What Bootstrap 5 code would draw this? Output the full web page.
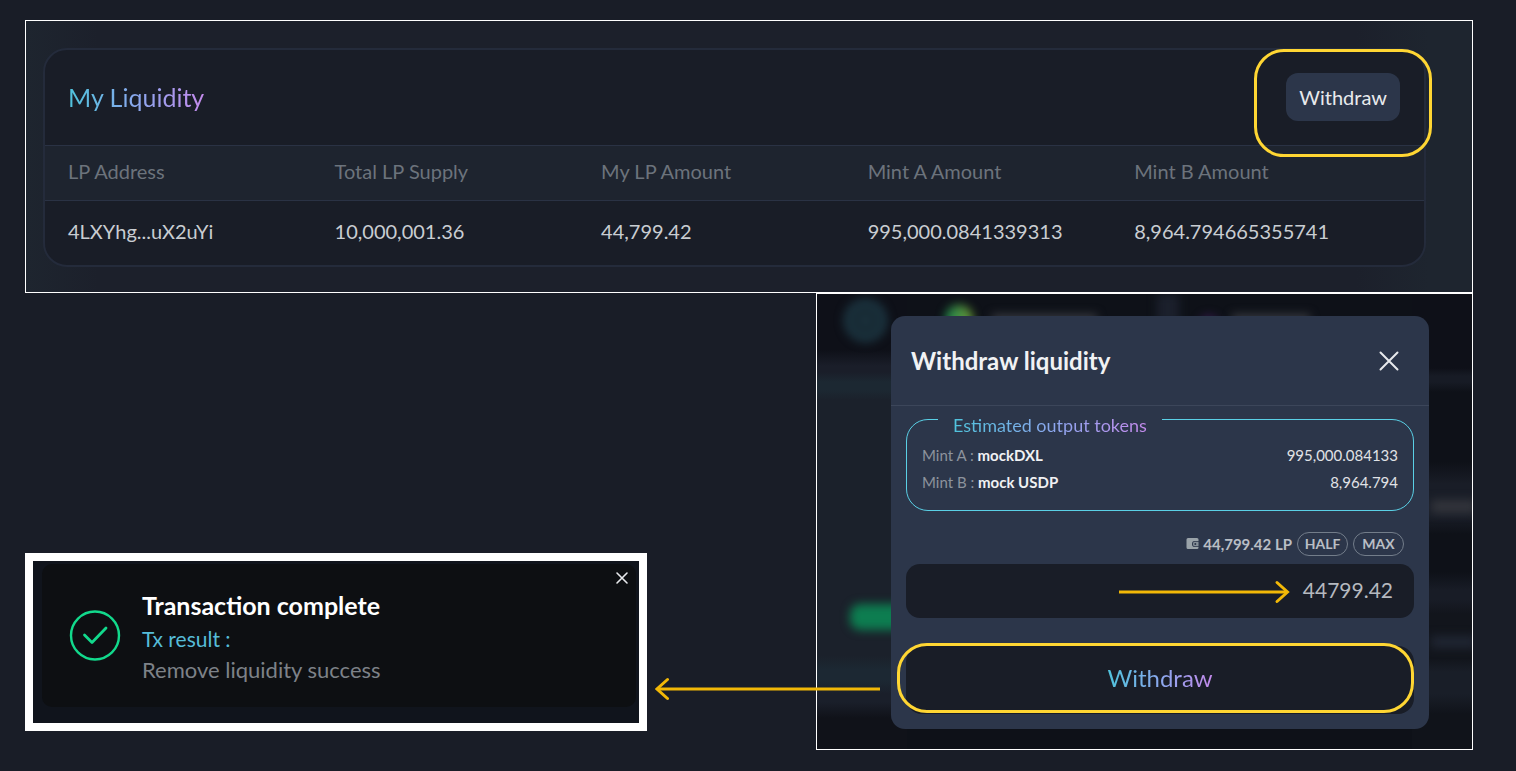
<!DOCTYPE html>
<html lang="en">
<head>
<meta charset="utf-8">
<meta name="viewport" content="width=device-width, initial-scale=1">
<title>Withdraw liquidity</title>
<link href="https://cdn.jsdelivr.net/npm/bootstrap@5.3.0/dist/css/bootstrap.min.css" rel="stylesheet">
<style>
  :root { --ink: #191d27; --slate: #2c364a; --cyan: #5ad0e6; --mark: #ffd633; --arrow: #f2b807; }
  body { background: var(--ink); color: #c9cdd2; font-family: Lato, "Liberation Sans", sans-serif; }
  .guide { padding: 20px 43px 20px 25px; }
  .grad-text { background: linear-gradient(90deg, #4fc3dc, #8aa8ee 50%, #c48aec); -webkit-background-clip: text; background-clip: text; color: transparent; }
  .marker { position: absolute; border: 3px solid var(--mark); border-radius: 30px; pointer-events: none; }
  .arrow { position: absolute; stroke: var(--arrow); stroke-width: 3; fill: none; stroke-linecap: round; }

  /* Liquidity overview */
  .overview { border: 1px solid #fff; background: linear-gradient(90deg, #1e252f, #1c202b 5%, #1c202b 92%, #1e252f 97%); padding: 27px 46px 25px 17px; }
  .pool { border: 2px solid #242b3b; border-radius: 24px; background: var(--ink); }
  .pool-head { height: 95px; padding: 0 24px 2px 23px; }
  .pool-title { font-size: 25px; line-height: 32px; }
  .btn-slate { background: var(--slate); color: #e8eaed; border: 0; border-radius: 12px; font-size: 20px; line-height: 24px; padding: 12px 13px; }
  .btn-slate:hover { background: #364259; color: #fff; }
  .pool-table { table-layout: fixed; width: 100%; font-size: 20px; line-height: 24px; }
  .pool-table col { width: 19.33%; }
  .pool-table col:last-child { width: auto; }
  .pool-table th, .pool-table td { padding: 13px 0 17px 23px; font-weight: 400; white-space: nowrap; }
  .pool-table th { background: #1e242f; color: #6c737c; border-top: 1px solid #2a3244; border-bottom: 1px solid #2a3244; }
  .pool-table td { padding-top: 18px; padding-bottom: 22px; }
  .mark-overview { top: -24px; right: -32px; bottom: -36px; left: -32px; }

  .lower { display: grid; grid-template-columns: 622fr 169fr 657fr; }

  /* Result notice */
  .notice-frame { border: 8px solid #fff; background: #10141c; padding: 3px 3px 16px 9px; margin-bottom: 19px; }
  .notice { background: #0d0f12; border-radius: 10px; padding: 0 27px; gap: 20px; height: 143px; }
  .notice-title { font-size: 25px; line-height: 36px; color: #fff; }
  .notice-text { font-size: 22px; line-height: 30px; color: #7d8288; }
  .notice-link { font-size: 21px; line-height: 32px; color: #56bcd8; text-decoration: none; }
  .notice-close { top: 7px; right: 7px; }
  .icon-btn { background: none; border: 0; padding: 0; line-height: 0; color: #e8eaed; }

  /* Withdraw dialog */
  .stage { border: 1px solid #fff; background: #0e1118; padding: 22px 43px 20px 74px; }
  .backdrop-art { position: absolute; inset: 0; overflow: hidden; }
  .side-l { position: absolute; left: 0; top: 0; bottom: 0; width: 90px; background: linear-gradient(#0e1018 0 56px, #1a1e29 72px 78px, #1c2832 88px 96px, #1b212b 106px 362px, #1c2833 376px 386px, #1a1f2a 400px 408px, #101219 424px); }
  .side-r { position: absolute; right: 0; top: 0; bottom: 0; width: 60px; background: linear-gradient(#0e1018 0 74px, #171b25 82px 88px, #0e1118 98px 168px, #191d27 190px 222px, #0e1118 240px 278px, #181c26 296px 306px, #12151c 320px 365px, #191e28 378px 400px, #10131a 420px); }
  .blob { position: absolute; filter: blur(5px); }
  .blob-ring { left: 26px; top: 4px; width: 45px; height: 45px; border-radius: 50%; background: radial-gradient(#1c3540 8%, #162731 22%, #1a303b 50%); filter: blur(4px); }
  .blob-coin { left: 128px; top: 11px; width: 28px; height: 28px; border-radius: 50%; background: linear-gradient(90deg, #17814d, #719a35); }
  .blob-name { left: 175px; top: 20px; width: 105px; height: 12px; background: #36383e; }
  .blob-bar { left: 340px; top: 0; width: 22px; height: 30px; background: #1b202c; }
  .blob-dot { left: 382px; top: 21px; width: 20px; height: 20px; border-radius: 50%; background: #33184a; }
  .blob-pair { left: 415px; top: 20px; width: 78px; height: 12px; background: #36383e; }
  .blob-btn { left: 33px; top: 310px; width: 70px; height: 26px; border-radius: 10px; background: #0d7d50; }
  .blob-r1 { right: -4px; top: 206px; width: 45px; height: 13px; background: #33353c; }
  .blob-r2 { right: -4px; top: 342px; width: 45px; height: 12px; background: #202633; }
  .sheet { background: var(--slate); border-radius: 14px; }
  .sheet-head { height: 90px; padding: 0 28px 0 20px; border-bottom: 1px solid #3c465a; }
  .sheet-title { font-size: 24px; line-height: 32px; color: #f1f2f4; }
  .sheet-body { padding: 0 15px 15px; }
  .estimate { border: 1px solid var(--cyan); border-radius: 22px; padding: 10px 15px 14px; }
  .estimate legend { float: none; width: auto; margin: 0 0 0 16px; padding: 12px 15px 0; font-size: 18px; line-height: 14px; }
  .estimate legend span { display: block; margin: -5px 0; line-height: 24px; }
  .estimate-row { font-size: 15px; line-height: 27px; color: #8c939d; }
  .estimate-row b { color: #f0f1f3; }
  .estimate-row output { padding: 0; color: #e0e2e6; }
  .balance { margin-top: 21px; padding-right: 10px; margin-bottom: 8px; font-size: 15px; line-height: 24px; color: #b9bec5; }
  .pill { border: 1px solid #737d8a; border-radius: 12px; background: none; color: #b9bec5; font-size: 14px; line-height: 22px; font-weight: 700; padding: 0 6px; margin-left: 5px; min-width: 51px; }
  .amount { height: 54px; border: 0; border-radius: 14px; background: var(--ink); color: #b5b9bf; font-size: 21px; text-align: right; padding: 0 21px 3px; }
  .amount:focus { background: var(--ink); color: #fff; }
  .submit { height: 68px; border: 0; border-radius: 16px; background: var(--ink); font-size: 24px; line-height: 32px; padding: 0 0 4px; }
  .mark-submit { top: -3px; right: 0; bottom: 1px; left: -9px; }
  .arrow-amount { right: 124px; top: 16px; }
  .arrow-result { left: -162px; bottom: 48px; }
</style>
</head>
<body>
<main class="guide">
  <section class="overview">
    <div class="pool">
      <div class="pool-head d-flex align-items-center justify-content-between">
        <h2 class="pool-title grad-text fw-normal m-0">My Liquidity</h2>
        <div class="position-relative">
          <button type="button" class="btn btn-slate">Withdraw</button>
          <span class="marker mark-overview"></span>
        </div>
      </div>
      <table class="pool-table">
        <colgroup><col><col><col><col><col></colgroup>
        <thead>
          <tr><th scope="col">LP Address</th><th scope="col">Total LP Supply</th><th scope="col">My LP Amount</th><th scope="col">Mint A Amount</th><th scope="col">Mint B Amount</th></tr>
        </thead>
        <tbody>
          <tr><td>4LXYhg...uX2uYi</td><td>10,000,001.36</td><td>44,799.42</td><td>995,000.0841339313</td><td>8,964.794665355741</td></tr>
        </tbody>
      </table>
    </div>
  </section>

  <div class="lower">
    <section class="notice-frame align-self-end">
      <div class="notice d-flex align-items-center position-relative" role="status">
        <svg class="flex-shrink-0" width="53" height="53" viewBox="0 0 53 53" fill="none" stroke="#12d98c" aria-hidden="true">
          <circle cx="26" cy="26.500" r="24" stroke-width="2.4"/>
          <path d="M15.500 26l7.500 7.500 14-14.500" stroke-width="2.8" stroke-linecap="round" stroke-linejoin="round"/>
        </svg>
        <div>
          <h3 class="notice-title fw-bold m-0">Transaction complete</h3>
          <a class="notice-link d-block" href="#">Tx result :</a>
          <p class="notice-text m-0">Remove liquidity success</p>
        </div>
        <button type="button" class="icon-btn notice-close position-absolute" aria-label="Close notice">
          <svg width="14" height="14" viewBox="0 0 14 14" stroke="currentColor" stroke-width="1.600" stroke-linecap="round"><path d="M2 2l10 10M12 2L2 12"/></svg>
        </button>
      </div>
    </section>
    <div></div>
    <section class="stage position-relative">
      <div class="backdrop-art" aria-hidden="true">
        <span class="side-l"></span><span class="side-r"></span>
        <span class="blob blob-ring"></span><span class="blob blob-coin"></span><span class="blob blob-name"></span>
        <span class="blob blob-bar"></span><span class="blob blob-dot"></span><span class="blob blob-pair"></span>
        <span class="blob blob-btn"></span><span class="blob blob-r1"></span><span class="blob blob-r2"></span>
      </div>
      <div class="sheet position-relative" role="dialog" aria-labelledby="sheet-title">
        <div class="sheet-head d-flex align-items-center justify-content-between">
          <h2 class="sheet-title fw-bold m-0" id="sheet-title">Withdraw liquidity</h2>
          <button type="button" class="icon-btn" aria-label="Close">
            <svg width="24" height="24" viewBox="0 0 24 24" stroke="currentColor" stroke-width="2" stroke-linecap="round"><path d="M3.500 3.500l17 17M20.500 3.500l-17 17"/></svg>
          </button>
        </div>
        <form class="sheet-body" onsubmit="return false">
          <fieldset class="estimate">
            <legend><span class="grad-text">Estimated output tokens</span></legend>
            <div class="estimate-row d-flex justify-content-between"><span>Mint A : <b>mockDXL</b></span><output>995,000.084133</output></div>
            <div class="estimate-row d-flex justify-content-between"><span>Mint B : <b>mock USDP</b></span><output>8,964.794</output></div>
          </fieldset>
          <div class="balance d-flex align-items-center justify-content-end">
            <svg class="me-1" width="13" height="12" viewBox="0 0 13 12" aria-hidden="true"><path fill="#9aa3a9" d="M2 0h9q1.500 0 1.500 1.500V3H8.500Q6 3 6 6t2.500 3h4v.5Q12.500 11 11 11H2Q.500 11 .500 9.500v-8Q.500 0 2 0z"/><path fill="#858f98" d="M8.500 3.800h4v4.400h-4Q7 8.200 7 6t1.500-2.200z"/><circle cx="9.300" cy="6" r="1" fill="#2c364a"/></svg>
            <label for="amount" class="fw-bold">44,799.42 LP</label>
            <button type="button" class="pill">HALF</button>
            <button type="button" class="pill">MAX</button>
          </div>
          <div class="position-relative">
            <input class="form-control amount shadow-none" id="amount" type="text" inputmode="decimal" value="44799.42">
            <svg class="arrow arrow-amount" width="172" height="24" viewBox="0 0 172 24" aria-hidden="true"><path stroke-linecap="butt" d="M1 12h168"/><path d="M159 2.500l10.500 9.500-10.500 9.500"/></svg>
          </div>
          <div class="position-relative mt-4 pt-1">
            <div class="position-relative">
              <button type="submit" class="btn submit w-100"><span class="grad-text">Withdraw</span></button>
              <span class="marker mark-submit"></span>
            </div>
          </div>
        </form>
      </div>
      <svg class="arrow arrow-result" width="225" height="24" viewBox="0 0 225 24" aria-hidden="true"><path stroke-linecap="butt" d="M2 12h223"/><path d="M12.500 2.500L2 12l10.500 9.500"/></svg>
    </section>
  </div>
</main>
<script src="https://cdn.jsdelivr.net/npm/bootstrap@5.3.0/dist/js/bootstrap.bundle.min.js"></script>
</body>
</html>
